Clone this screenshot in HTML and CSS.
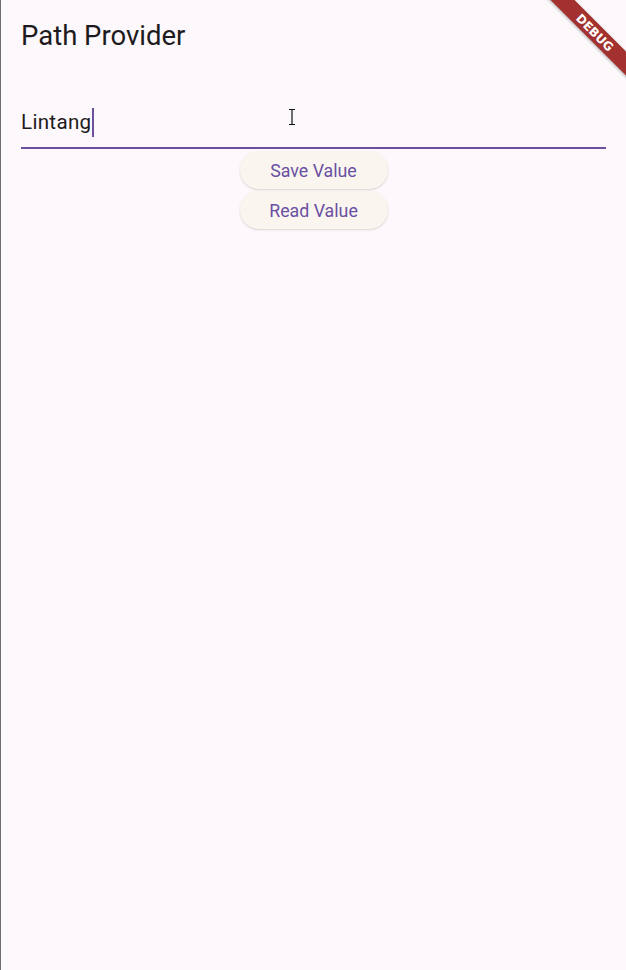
FILE: index.html
```html
<!DOCTYPE html>
<html>
<head>
<meta charset="utf-8">
<link rel="stylesheet" href="styles.css">
</head>
<body>
<div class="screen">
  <header class="appbar"><h1 class="title">Path Provider</h1></header>
  <main class="content">
    <div class="field">
      <span class="value">Lintang</span><span class="caret"></span>
      <svg class="ibeam" width="8" height="16" viewBox="0 0 8 16"><path d="M1 0.5h6M1 15.5h6M4 0.5v15" stroke="#111" stroke-width="1.2" fill="none"/></svg>
    </div>
    <div class="buttons">
      <button class="btn">Save Value</button>
      <button class="btn">Read Value</button>
    </div>
  </main>
  <div class="banner"><span>DEBUG</span></div>
</div>
</body>
</html>
```
FILE: styles.css
```css
html, body { margin: 0; padding: 0; }
body {
  width: 626px;
  height: 970px;
  overflow: hidden;
  background: #fcf8fb;
  font-family: Roboto, "Noto Sans", sans-serif;
}
.screen {
  position: relative;
  height: 970px;
  border-left: 1px solid #6e6e6e;
  box-sizing: border-box;
  overflow: hidden;
}
.appbar {
  height: 70px;
  display: flex;
  align-items: center;
  padding-left: 20px;
}
.title {
  margin: 0;
  font-weight: 400;
  font-size: 27.5px;
  color: #1d1b20;
  letter-spacing: 0;
  position: relative;
  top: 0;
}
.content {
  padding: 0 20px 0 20px;
}
.field {
  position: relative;
  height: 79px;
  border-bottom: 2px solid #6d4fa0;
  display: flex;
  align-items: flex-end;
  padding-bottom: 11px;
  box-sizing: border-box;
}
.value {
  font-size: 20.6px;
  color: #1d1b20;
  letter-spacing: 0.3px;
  line-height: 28px;
}
.caret {
  display: inline-block;
  width: 2px;
  height: 29px;
  background: #6d4fa0;
  margin-left: 1px;
  margin-bottom: -1px;
}
.ibeam {
  position: absolute;
  left: 267px;
  top: 39px;
}
.buttons {
  display: flex;
  flex-direction: column;
  align-items: center;
  gap: 2px;
  padding-top: 2px;
}
.btn {
  width: 148px;
  height: 38px;
  border-radius: 19px;
  border: none;
  background: #faf6ef;
  box-shadow: 0 1px 2px rgba(80, 70, 30, 0.2);
  color: #6a4fa3;
  font-family: Roboto, "Noto Sans", sans-serif;
  font-size: 17.8px;
  font-weight: 400;
  padding: 0;
  margin: 0;
}
.banner {
  position: absolute;
  top: 24px;
  right: -34px;
  width: 130px;
  height: 17px;
  background: #a3312f;
  transform: rotate(45deg);
  display: flex;
  align-items: center;
  justify-content: center;
  box-shadow: 0 1px 3px rgba(0,0,0,0.3);
}
.banner span {
  color: #fff;
  font-family: "DejaVu Sans", sans-serif;
  font-weight: bold;
  font-size: 12px;
  letter-spacing: 0;
}
```
